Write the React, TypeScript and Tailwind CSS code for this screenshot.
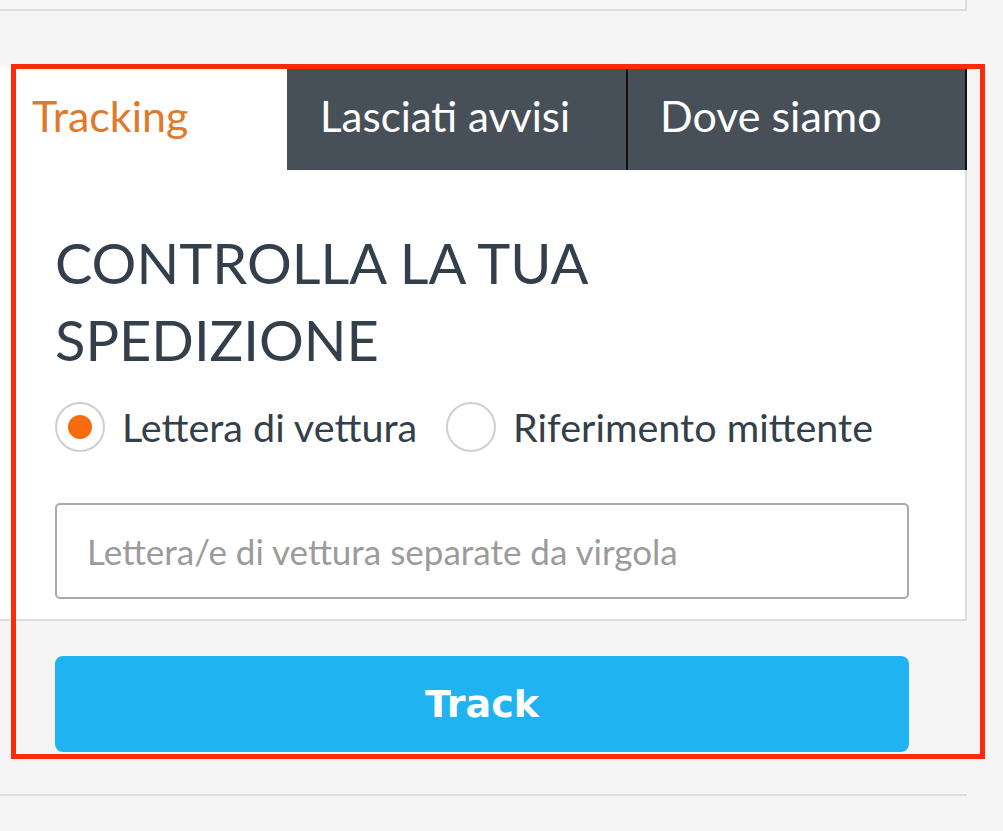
import React, { useState } from "react";

const tabs = ["Tracking", "Lasciati avvisi", "Dove siamo"];

function Radio({ checked, label, onSelect }: { checked: boolean; label: string; onSelect: () => void }) {
  return (
    <button type="button" onClick={onSelect} className="flex items-center gap-[17px]">
      <span className="flex h-[50px] w-[50px] items-center justify-center rounded-full border-2 border-[#cfcfcf] bg-white">
        {checked && <span className="h-[24px] w-[24px] rounded-full bg-[#f46b10]" />}
      </span>
      <span className="text-[39.5px] leading-none text-[#333f4a]">{label}</span>
    </button>
  );
}

export default function App() {
  const [active, setActive] = useState(0);
  const [mode, setMode] = useState<"awb" | "ref">("awb");

  const tabTone = (i: number) => (active === i ? "bg-white text-[#e07a2b]" : "bg-[#475058] text-white");

  return (
    <div
      className="min-h-[831px] w-[1003px] bg-[#f5f5f5]"
      style={{ fontFamily: "Lato, 'Noto Sans', sans-serif" }}
    >
      <div className="w-[967px]">
        {/* previous card edge */}
        <div className="h-[11px] border-b-2 border-r-2 border-[#dddddd] bg-[#f7f7f7]" />

        <div className="relative mt-[55px]">
          {/* tracking widget */}
          <div className="border-b-2 border-r-2 border-[#dddddd] bg-white">
            <div className="-mr-[2px] flex h-[104px]">
              <button
                type="button"
                onClick={() => setActive(0)}
                className={"flex w-[287px] items-center pb-[4px] pl-[32px] text-[43px] " + tabTone(0)}
              >
                {tabs[0]}
              </button>
              <button
                type="button"
                onClick={() => setActive(1)}
                className={"flex w-[341px] items-center border-r-2 border-[#111] pb-[4px] pl-[33px] text-[42px] " + tabTone(1)}
              >
                {tabs[1]}
              </button>
              <button
                type="button"
                onClick={() => setActive(2)}
                className={"flex flex-1 items-center border-r-2 border-[#111] pb-[4px] pl-[32px] text-[43px] " + tabTone(2)}
              >
                {tabs[2]}
              </button>
            </div>

            <div className="pb-[20px] pl-[55px] pr-[56px] pt-[54px]">
              <h2 className="text-[56px] leading-[77px] text-[#333f4a]">
                CONTROLLA LA TUA
                <br />
                SPEDIZIONE
              </h2>
              <div className="mt-[24px] flex items-center gap-[29px]">
                <Radio checked={mode === "awb"} label="Lettera di vettura" onSelect={() => setMode("awb")} />
                <Radio checked={mode === "ref"} label="Riferimento mittente" onSelect={() => setMode("ref")} />
              </div>
              <input
                type="text"
                placeholder="Lettera/e di vettura separate da virgola"
                className="mt-[51px] h-[96px] w-full rounded-[5px] border-2 border-[#a9a9a9] px-[30px] text-[35px] text-[#333f4a] outline-none placeholder:text-[#9b9b9b]"
              />
            </div>
          </div>

          <button
            type="button"
            className="ml-[55px] mt-[35px] flex h-[96px] w-[854px] items-center justify-center rounded-[8px] bg-[#1fb3f1] text-[38px] font-bold text-white"
            style={{ fontFamily: "'DejaVu Sans', Verdana, sans-serif" }}
          >
            Track
          </button>

          {/* highlight frame */}
          <div className="pointer-events-none absolute left-[11px] top-[-2px] h-[695px] w-[974px] border-[5px] border-[#fa2a0a]" />
        </div>

        <div className="mt-[42px] h-[2px] bg-[#dddddd]" />
      </div>
    </div>
  );
}
